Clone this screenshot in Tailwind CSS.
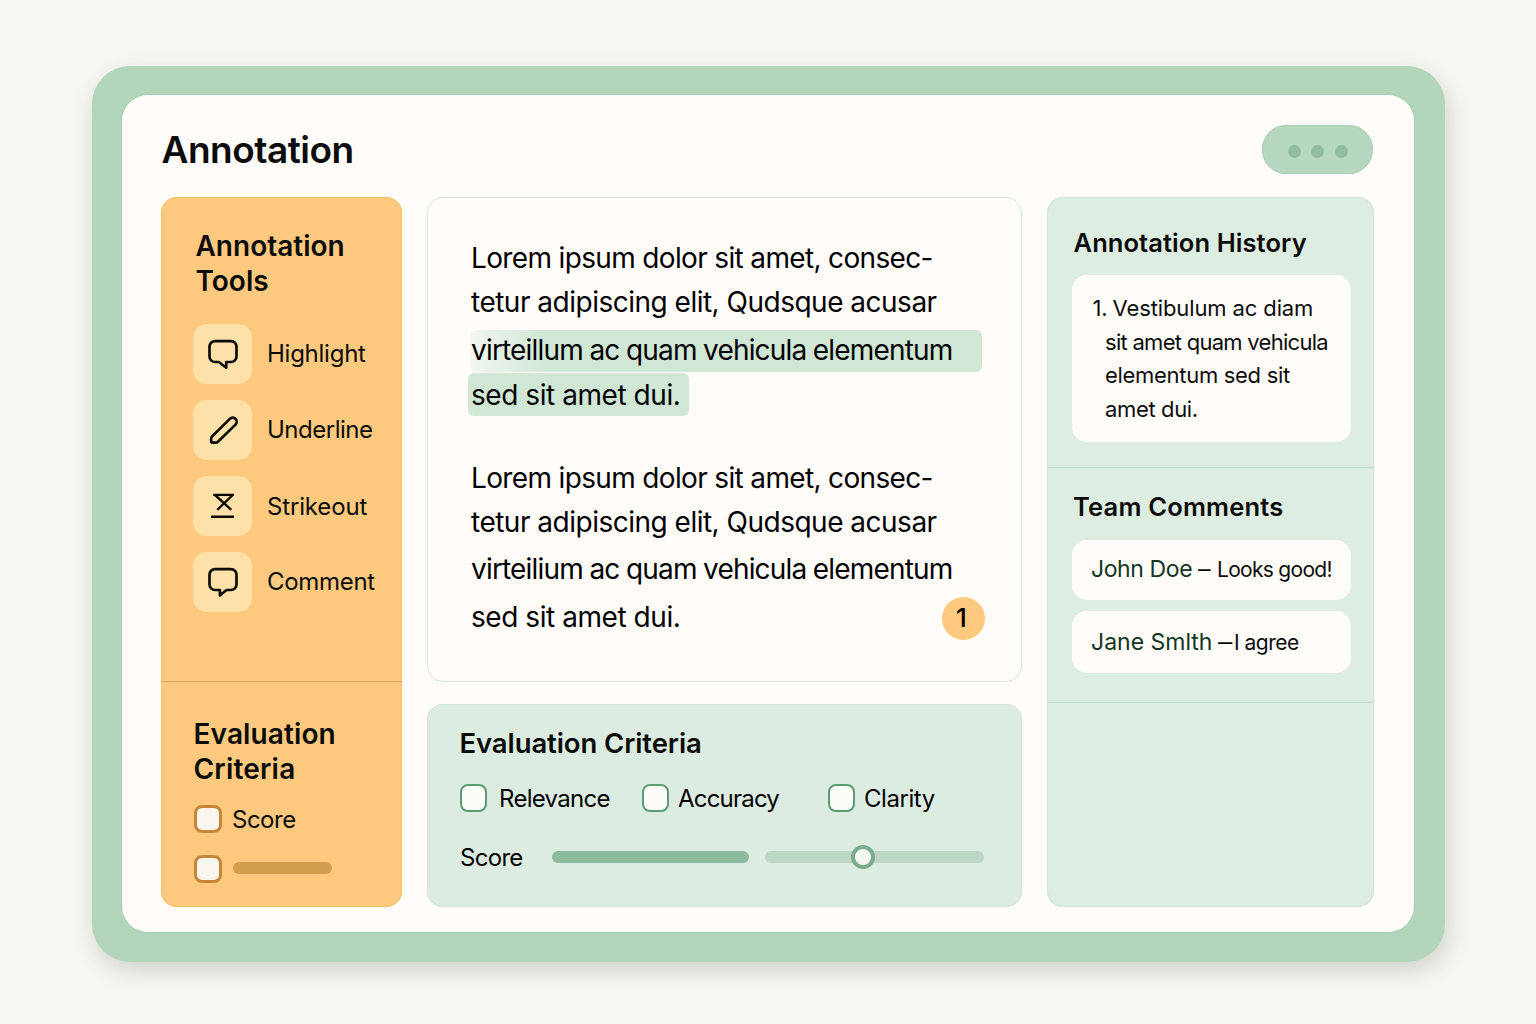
<!DOCTYPE html>
<html lang="en">
<head>
<meta charset="utf-8">
<title>Annotation</title>
<script src="https://cdn.jsdelivr.net/npm/@tailwindcss/browser@4"></script>
</head>
<body class="w-[1536px] h-[1024px] overflow-hidden bg-[#f7f7f2] font-['Inter',sans-serif] text-[#0b0c0a] pl-[92px] pt-[66px] whitespace-nowrap">
<div class="w-[1353px] h-[896px] rounded-[38px] bg-[#b2d5bc] shadow-[3px_9px_22px_rgba(60,70,55,0.2)] pl-[30px] pt-[29px]">
<main class="w-[1292px] h-[837px] rounded-[26px] bg-[#fffcf9] shadow-[0_0_0_1px_#a3d0b3] pl-[39px] pt-[30px]">
  <header class="w-[1212px] h-[72px] flex justify-between items-start">
    <h1 class="text-[37px] leading-[49px] font-semibold tracking-[-0.5px] pl-[0.5px]">Annotation</h1>
    <button class="w-[111px] h-[49px] rounded-full bg-[#b7d8c0] shadow-[inset_0_0_0_1px_#a9d0b5] flex items-center justify-center gap-[10.5px] pt-[3px]">
      <span class="size-[13px] rounded-full bg-[#90bc9f]"></span><span class="size-[13px] rounded-full bg-[#90bc9f]"></span><span class="size-[13px] rounded-full bg-[#90bc9f]"></span>
    </button>
  </header>
  <div class="flex items-start">
    <aside class="w-[241px] h-[710px] rounded-[16px] bg-[#fdc97f] shadow-[inset_0_0_0_1px_#fbc068]">
      <section class="h-[485px] border-b border-[#dfa65a] pl-8 pt-8">
        <h2 class="text-[28px] leading-[35px] font-semibold pl-[2.5px]">Annotation<br>Tools</h2>
        <ul class="mt-[25px] flex flex-col gap-4 text-[24px]">
          <li class="flex items-center gap-[15px] h-[60px]"><span class="w-[59px] h-[60px] rounded-[14px] bg-[#fee1a9]"><svg class="w-[59px] h-[60px]" viewBox="0 0 59 60" fill="none" stroke="#0b0c0a" stroke-width="2.7" stroke-linejoin="round"><path d="M22 17.200h16a5.500 5.500 0 0 1 5.500 5.500v9.800a5.500 5.500 0 0 1-5.500 5.500h-4.800v5.700L25.800 38H22a5.500 5.500 0 0 1-5.500-5.500v-9.800a5.500 5.500 0 0 1 5.500-5.500z"/></svg></span><span class="tracking-[-0.25px]">Highlight</span></li>
          <li class="flex items-center gap-[15px] h-[60px]"><span class="w-[59px] h-[60px] rounded-[14px] bg-[#fee1a9]"><svg class="w-[59px] h-[60px]" viewBox="0 0 59 60" fill="none" stroke="#0b0c0a" stroke-width="2.700" stroke-linejoin="round"><path d="M19.300 36.200 36.800 18.900a4 4 0 0 1 5.700 5.700L25.200 41.500q-1.200 1.200-2.800 1.200h-2.400q-1.800 0-1.800-1.800v-2.100q0-1.500 1.100-2.600z"/></svg></span><span class="tracking-[-0.5px]">Underline</span></li>
          <li class="flex items-center gap-[15px] h-[60px]"><span class="w-[59px] h-[60px] rounded-[14px] bg-[#fee1a9]"><svg class="w-[59px] h-[60px]" viewBox="0 0 59 60" fill="none" stroke="#0b0c0a" stroke-width="2.400"><path d="M20.300 18.900H41M22 19l16.300 14.800M39.700 19 24.300 33.800M18 40.700h23"/></svg></span><span class="tracking-[-0.15px] pt-px">Strikeout</span></li>
          <li class="flex items-center gap-[15px] h-[60px]"><span class="w-[59px] h-[60px] rounded-[14px] bg-[#fee1a9]"><svg class="w-[59px] h-[60px]" viewBox="0 0 59 60" fill="none" stroke="#0b0c0a" stroke-width="2.700" stroke-linejoin="round"><path d="M22 17.200h16a5.500 5.500 0 0 1 5.500 5.500v9.800a5.500 5.500 0 0 1-5.500 5.500h-4.500l-6.600 5.500V38H22a5.500 5.500 0 0 1-5.500-5.500v-9.800a5.500 5.500 0 0 1 5.500-5.500z"/></svg></span><span class="tracking-[-0.3px]">Comment</span></li>
        </ul>
      </section>
      <section class="pl-[33px] pt-[35px]">
        <h2 class="text-[28px] leading-[35px] font-semibold -ml-[0.5px] tracking-[0.12px]">Evaluation<br><span class="tracking-[0.2px]">Criteria</span></h2>
        <div class="mt-[18px] flex items-center gap-[10px] h-7 text-[24px]"><span class="size-7 rounded-[8px] border-3 border-[#c5863a] bg-[#f9f6ef]"></span><span class="tracking-[-0.5px] pt-px">Score</span></div>
        <div class="mt-[22px] flex items-center gap-[11px] h-7"><span class="size-7 rounded-[8px] border-3 border-[#c5863a] bg-[#f9f6ef]"></span><span class="w-[99px] h-3 mb-[2px] rounded-full bg-[#cf9f4e]"></span></div>
      </section>
    </aside>

    <div class="ml-[25px] w-[595px]">
      <article class="h-[485px] rounded-[16px] border-[1.5px] border-[#d3e7da] pl-[42px] pt-[38px] text-[28px] text-black">
        <p class="pl-px leading-[44px] tracking-[-0.65px]">Lorem ipsum dolor sit amet, consec-</p>
        <p class="pl-px leading-[44px] tracking-[-0.5px]">tetur adipiscing elit, Qudsque acusar</p>
        <p class="pl-px mt-[6px] w-[512px] h-[41.5px] leading-[41px] rounded-[6px] bg-linear-to-r from-[#f2f7f2] to-[#d0e7d6] to-15% tracking-[-0.82px] [word-spacing:-0.6px]">virteillum ac quam vehicula elementum</p>
        <p class="mt-[1.5px] -ml-[2.500px] pl-[3.500px] w-[221.500px] h-[43px] leading-[45px] rounded-[6px] bg-[#d0e7d6] tracking-[-0.44px]">sed sit amet dui.</p>
        <p class="pl-px mt-10 leading-[44px] tracking-[-0.65px]">Lorem ipsum dolor sit amet, consec-</p>
        <p class="pl-px leading-[44px] tracking-[-0.5px]">tetur adipiscing elit, Qudsque acusar</p>
        <p class="pl-px h-[49px] leading-[51px] tracking-[-0.82px] [word-spacing:-0.6px]">virteilium ac quam vehicula elementum</p>
        <div class="mt-1 w-[515px] flex justify-between">
          <p class="pl-px leading-[41px] tracking-[-0.44px]">sed sit amet dui.</p>
          <span class="size-[43px] rounded-full bg-[#fdc97f] text-[26px] leading-[42px] font-medium text-center pr-1">1</span>
        </div>
      </article>
      <section class="mt-[22px] h-[203px] rounded-[16px] bg-[#dcece0] shadow-[inset_0_0_0_1px_#d0e6d7] pl-[33px] pt-[22px]">
        <h2 class="text-[27.500px] leading-[35px] font-semibold -ml-[0.5px] tracking-[-0.1px]">Evaluation Criteria</h2>
        <div class="mt-[23px] flex h-7 items-center text-[24px] text-black">
          <span class="w-[27px] h-7 rounded-[8px] border-[2.5px] border-[#5b9c76] bg-[#fdfcf8]"></span><span class="ml-3 w-[143px] tracking-[-0.7px] pt-px">Relevance</span>
          <span class="w-[27px] h-7 rounded-[8px] border-[2.5px] border-[#5b9c76] bg-[#fdfcf8]"></span><span class="ml-[9px] w-[150px] tracking-[-0.8px] pt-px">Accuracy</span>
          <span class="w-[27px] h-7 rounded-[8px] border-[2.5px] border-[#5b9c76] bg-[#fdfcf8]"></span><span class="ml-[9px] tracking-[-0.45px] pt-px">Clarity</span>
        </div>
        <div class="mt-[27px] flex h-9 items-center text-[24px] text-black">
          <span class="w-[92px] tracking-[-0.7px] pt-px">Score</span>
          <span class="w-[197px] h-3 rounded-full bg-[#8cba9c]"></span>
          <span class="relative ml-4 w-[219px] h-3 rounded-full bg-[#bdd6c6]"><span class="absolute left-[85.500px] -top-[6px] size-6 rounded-full border-4 border-[#78ae8c] bg-[#f5f7f1]"></span></span>
        </div>
      </section>
    </div>

    <aside class="ml-[25px] w-[327px] h-[710px] rounded-[16px] bg-[#deede1] shadow-[inset_0_0_0_1px_#d0e6d7]">
      <section class="h-[271px] border-b border-[#bedccb] pl-[25px] pt-[30px]">
        <h2 class="text-[25.500px] leading-[32px] font-semibold pl-[1.500px] tracking-[0.08px]">Annotation History</h2>
        <div class="mt-4 w-[279px] h-[167px] rounded-[15px] bg-[#fffcf9] pl-[33px] pt-[17px] text-[22px] leading-[33.600px]">
          <p class="-ml-[12.500px] flex gap-[5px] tracking-[-0.120px]"><span>1.</span><span>Vestibulum ac diam</span></p>
          <p class="tracking-[-0.720px]">sit amet quam vehicula</p>
          <p class="tracking-[-0.300px]">elementum sed sit</p>
          <p class="tracking-[-0.350px]">amet dui.</p>
        </div>
      </section>
      <section class="h-[235px] border-b border-[#bedccb] pl-[25px] pt-[23px]">
        <h2 class="text-[25.500px] leading-[32px] font-semibold pl-[1px] tracking-[0.200px]">Team Comments</h2>
        <div class="mt-[17px] w-[279px] h-[60px] rounded-[15px] bg-[#fffcf9] pl-[19px] flex items-baseline leading-[58px] text-[21px]"><span class="w-[107px] text-[23px] text-[#12361f] tracking-[-0.400px]">John Doe</span><span class="w-[19px] origin-left scale-x-[1.200]">–</span><span class="tracking-[-0.700px]">Looks good!</span></div>
        <div class="mt-[11px] w-[279px] h-[62px] rounded-[15px] bg-[#fffcf9] pl-[19px] flex items-baseline leading-[62px] text-[21px]"><span class="w-[127px] text-[23px] text-[#12361f]">Jane Smlth</span><span class="w-[16px] origin-left scale-x-[0.680]">—</span><span class="tracking-[-0.5px]">I agree</span></div>
      </section>
    </aside>
  </div>
</main>
</div>
</body>
</html>
